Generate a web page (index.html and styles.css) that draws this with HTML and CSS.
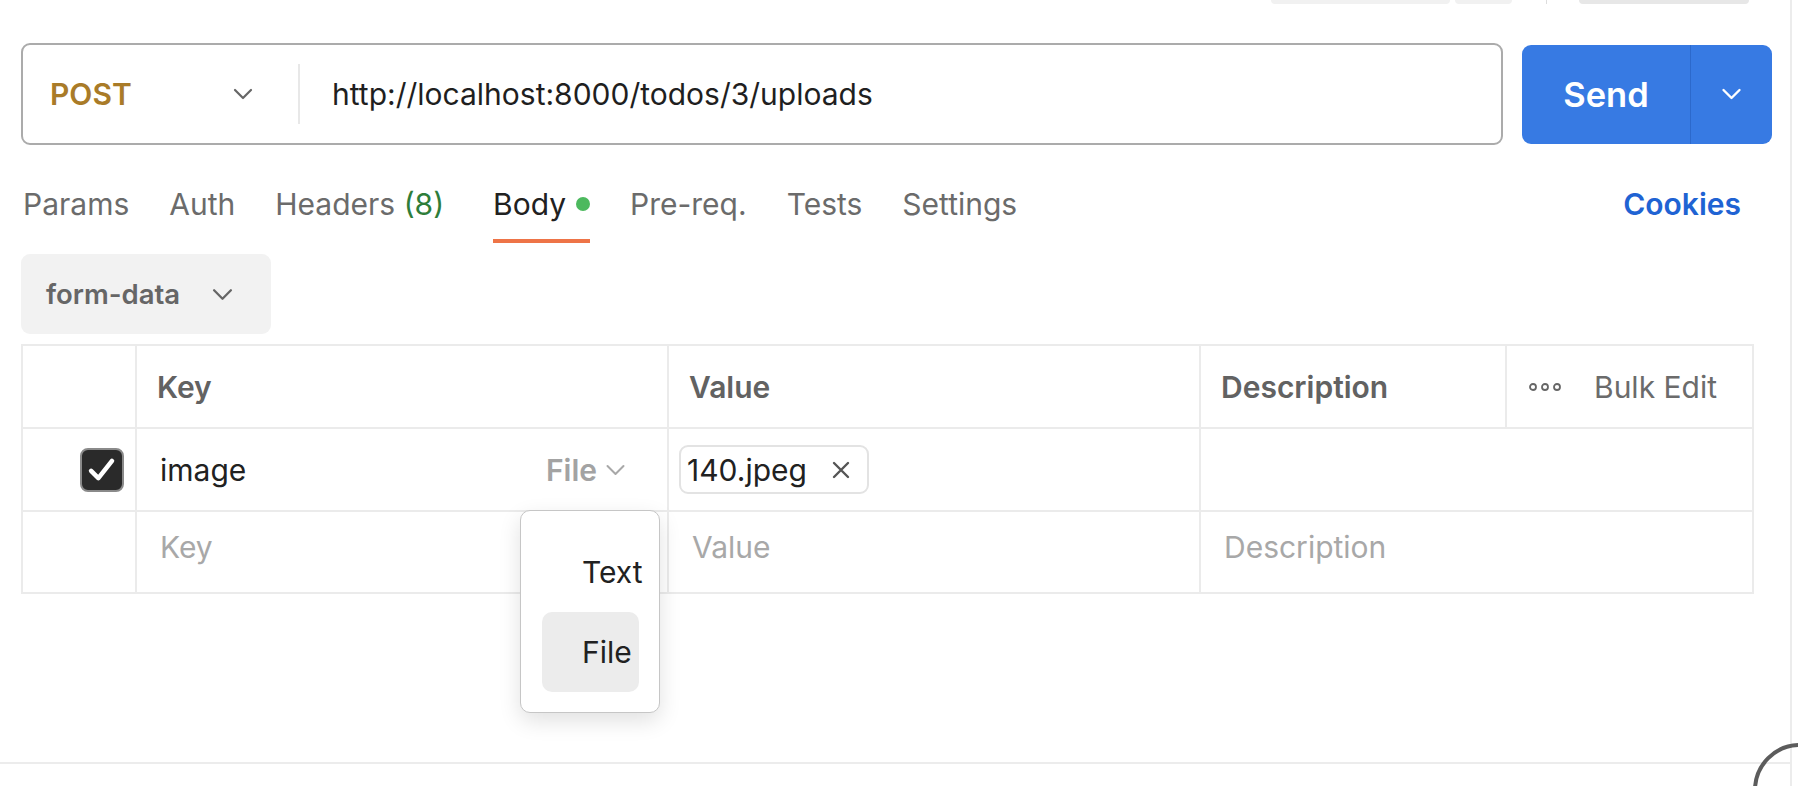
FILE: index.html
```html
<!DOCTYPE html>
<html lang="en">
<head>
<meta charset="utf-8">
<title>Request - form-data</title>
<link rel="stylesheet" href="styles.css">
</head>
<body>
<div class="app">
  <div class="panel">
    <div class="editor">
      <div class="peek-bar">
        <span class="peek peek-a"></span>
        <span class="peek peek-b"></span>
        <span class="peek-sep"></span>
        <span class="peek peek-c"></span>
      </div>

      <div class="request-row">
        <div class="url-box">
          <div class="method">
            <span class="method-name">POST</span>
            <svg class="chev chev-method" viewBox="0 0 20 12"><polyline points="2,2 10,10 18,2"/></svg>
          </div>
          <div class="url-divider"></div>
          <div class="url-text">http://localhost:8000/todos/3/uploads</div>
        </div>
        <div class="send">
          <span class="send-label">Send</span>
          <span class="send-caret"><svg class="chev chev-send" viewBox="0 0 20 12"><polyline points="2,2 10,10 18,2"/></svg></span>
        </div>
      </div>

      <div class="tabs">
        <span class="tab">Params</span>
        <span class="tab">Auth</span>
        <span class="tab">Headers <span class="count">(8)</span></span>
        <span class="tab active">Body<span class="dot"></span></span>
        <span class="tab">Pre-req.</span>
        <span class="tab">Tests</span>
        <span class="tab">Settings</span>
        <span class="cookies">Cookies</span>
      </div>

      <div class="body-type">
        <span>form-data</span>
        <svg class="chev chev-type" viewBox="0 0 20 12"><polyline points="2,2 10,10 18,2"/></svg>
      </div>

      <div class="kv-table">
        <div class="cell head"></div>
        <div class="cell head pad-head">Key</div>
        <div class="cell head pad-head">Value</div>
        <div class="cell head pad-head">Description</div>
        <div class="cell head bulk">
          <svg class="dots" viewBox="0 0 32 10"><circle cx="4" cy="5" r="3"/><circle cx="16" cy="5" r="3"/><circle cx="28" cy="5" r="3"/></svg>
          <span>Bulk Edit</span>
        </div>

        <div class="cell check-cell">
          <span class="checkbox"><svg viewBox="0 0 44 44"><polyline points="10,23 18,31 33,12"/></svg></span>
        </div>
        <div class="cell key-cell">
          <span class="key-text">image</span>
          <span class="type-select">File<svg class="chev chev-file" viewBox="0 0 20 12"><polyline points="2,2 10,10 18,2"/></svg></span>
          <div class="type-menu">
            <div class="menu-item">Text</div>
            <div class="menu-item selected">File</div>
          </div>
        </div>
        <div class="cell value-cell">
          <span class="file-chip">140.jpeg<svg class="chip-x" viewBox="0 0 18 18"><path d="M2 2 L16 16 M16 2 L2 16"/></svg></span>
        </div>
        <div class="cell desc-cell"></div>

        <div class="cell"></div>
        <div class="cell placeholder pad-row">Key</div>
        <div class="cell placeholder pad-row">Value</div>
        <div class="cell placeholder pad-row desc-cell">Description</div>
      </div>
    </div>
    <div class="bottom-rule"></div>
    <div class="footer-space"></div>
  </div>
  <svg class="corner-ring" viewBox="0 0 60 60"><circle cx="62" cy="64" r="45"/></svg>
</div>
</body>
</html>
```

FILE: styles.css
```css
* { box-sizing: border-box; }

html, body {
  margin: 0;
  padding: 0;
  background: #ffffff;
}

body {
  font-family: "Inter", "Noto Sans", "Liberation Sans", sans-serif;
  color: #212121;
  font-size: 30px;
}

.app {
  position: relative;
  width: 1798px;
  height: 786px;
  overflow: hidden;
}

.panel {
  width: 1792px;
  height: 786px;
  border-right: 2px solid #ececec;
  display: flex;
  flex-direction: column;
}

.editor {
  flex: 1;
  padding: 0 18px 0 21px;
  display: flex;
  flex-direction: column;
}

/* cut-off toolbar above */
.peek-bar {
  height: 4px;
  display: flex;
  justify-content: flex-end;
  align-items: flex-start;
  padding-right: 23px;
}
.peek {
  height: 4px;
  border-radius: 0 0 6px 6px;
  background: #f1f1f1;
}
.peek-a { width: 179px; }
.peek-b { width: 57px; margin-left: 5px; }
.peek-sep { width: 1px; height: 4px; background: #dddddd; margin-left: 34px; }
.peek-c { width: 170px; margin-left: 32px; background: #e7e7e7; }

/* request row */
.request-row {
  margin-top: 39px;
  display: flex;
  align-items: center;
  gap: 19px;
}
.url-box {
  width: 1482px;
  height: 102px;
  border: 2px solid #ababab;
  border-radius: 9px;
  display: flex;
  align-items: center;
}
.method {
  width: 275px;
  display: flex;
  align-items: center;
  justify-content: space-between;
  padding-left: 27px;
  padding-right: 45px;
}
.method-name {
  color: #a97b28;
  font-weight: 600;
  font-size: 30px;
}
.chev {
  fill: none;
  stroke-linecap: round;
  stroke-linejoin: round;
}
.chev-method {
  width: 20px;
  height: 12px;
  stroke: #666666;
  stroke-width: 2.2;
}
.url-divider {
  width: 2px;
  height: 60px;
  background: #e8e8e8;
}
.url-text {
  padding-left: 32px;
  font-size: 30px;
  color: #1f1f1f;
}

.send {
  width: 250px;
  height: 99px;
  background: #377ae3;
  border-radius: 9px;
  display: flex;
  align-items: stretch;
  color: #ffffff;
}
.send-label {
  width: 169px;
  display: flex;
  align-items: center;
  justify-content: center;
  font-weight: 600;
  font-size: 34.5px;
  border-right: 1px solid #2c69cc;
}
.send-caret {
  flex: 1;
  display: flex;
  align-items: center;
  justify-content: center;
}
.chev-send {
  width: 21px;
  height: 12px;
  stroke: #ffffff;
  stroke-width: 2.4;
}

/* tabs */
.tabs {
  margin-top: 41px;
  display: flex;
  align-items: flex-start;
  padding-left: 2px;
}
.tab {
  line-height: 36px;
  padding-bottom: 17px;
  border-bottom: 4px solid transparent;
  color: #6b6b6b;
  font-size: 30px;
  margin-right: 40px;
  display: flex;
  align-items: center;
  white-space: pre;
}
.tab .count { color: #2e7d3a; }
.tab.active {
  color: #212121;
  border-bottom-color: #ee7447;
  margin-left: 9px;
}
.dot {
  width: 14px;
  height: 14px;
  border-radius: 50%;
  background: #4cb95e;
  margin-left: 10px;
}
.cookies {
  margin-left: auto;
  margin-right: 31px;
  line-height: 36px;
  color: #1f63d3;
  font-weight: 600;
  font-size: 30px;
}

/* body type */
.body-type {
  margin-top: 11px;
  width: 250px;
  height: 80px;
  border-radius: 9px;
  background: #f2f2f2;
  display: flex;
  align-items: center;
  padding-left: 25px;
  color: #666666;
  font-weight: 600;
  font-size: 27.5px;
}
.chev-type {
  width: 21px;
  height: 13px;
  stroke: #666666;
  stroke-width: 2.2;
  margin-left: 32px;
}

/* table */
.kv-table {
  margin-top: 10px;
  width: 1733px;
  display: grid;
  grid-template-columns: 114px 532px 532px 306px 247px;
  grid-template-rows: 83px 83px 82px;
  border-left: 2px solid #ebebeb;
  border-top: 2px solid #ebebeb;
}
.cell {
  border-right: 2px solid #ebebeb;
  border-bottom: 2px solid #ebebeb;
  display: flex;
  align-items: center;
  min-width: 0;
}
.head {
  color: #626262;
  font-weight: 600;
  font-size: 30px;
}
.pad-head { padding-left: 20px; }
.pad-row { padding-left: 23px; padding-bottom: 10px; }
.bulk {
  padding-left: 22px;
  font-weight: 400;
  color: #6b6b6b;
  font-size: 30px;
}
.dots {
  width: 32px;
  height: 10px;
  fill: none;
  stroke: #666666;
  stroke-width: 1.8;
  margin-right: 33px;
}
.desc-cell { grid-column: span 2; }

.check-cell {
  justify-content: flex-end;
  padding-right: 11px;
}
.checkbox {
  width: 44px;
  height: 44px;
  border-radius: 8px;
  background: #2a2a2a;
  border: 2px solid #8a8a8a;
  display: flex;
}
.checkbox svg {
  width: 40px;
  height: 40px;
  fill: none;
  stroke: #ffffff;
  stroke-width: 5;
  stroke-linecap: round;
  stroke-linejoin: round;
}

.key-cell {
  position: relative;
  padding-left: 23px;
  padding-right: 41px;
}
.key-text { flex: 1; font-size: 30px; }
.type-select {
  display: flex;
  align-items: center;
  color: #a3a3a3;
  font-weight: 600;
  font-size: 30px;
}
.chev-file {
  width: 21px;
  height: 12px;
  stroke: #a8a8a8;
  stroke-width: 2;
  margin-left: 8px;
}

.type-menu {
  position: absolute;
  left: 383px;
  top: 81px;
  z-index: 5;
  width: 140px;
  height: 203px;
  padding: 21px 20px 0 21px;
  background: #ffffff;
  border: 1.5px solid #c6c6c6;
  border-radius: 10px;
  box-shadow: 0 8px 22px rgba(0, 0, 0, 0.12);
}
.menu-item {
  height: 80px;
  display: flex;
  align-items: center;
  padding-left: 40px;
  border-radius: 10px;
  font-size: 30px;
  color: #212121;
  white-space: nowrap;
}
.menu-item.selected { background: #ececec; }

.value-cell { padding-left: 10px; }
.file-chip {
  height: 49px;
  width: 190px;
  border: 2px solid #e3e3e3;
  border-radius: 9px;
  display: flex;
  align-items: center;
  padding-left: 6px;
  font-size: 30px;
  color: #212121;
}
.chip-x {
  width: 18px;
  height: 18px;
  margin-left: 25px;
  fill: none;
  stroke: #555555;
  stroke-width: 2.4;
  stroke-linecap: round;
}

.placeholder {
  color: #a8a8a8;
  font-size: 30px;
}

.bottom-rule {
  height: 2px;
  background: #ececec;
  margin-right: -2px;
}
.footer-space { height: 22px; }

.corner-ring {
  position: absolute;
  right: 0;
  bottom: 0;
  width: 60px;
  height: 60px;
  fill: none;
  stroke: #5c5c5c;
  stroke-width: 4;
}
```
